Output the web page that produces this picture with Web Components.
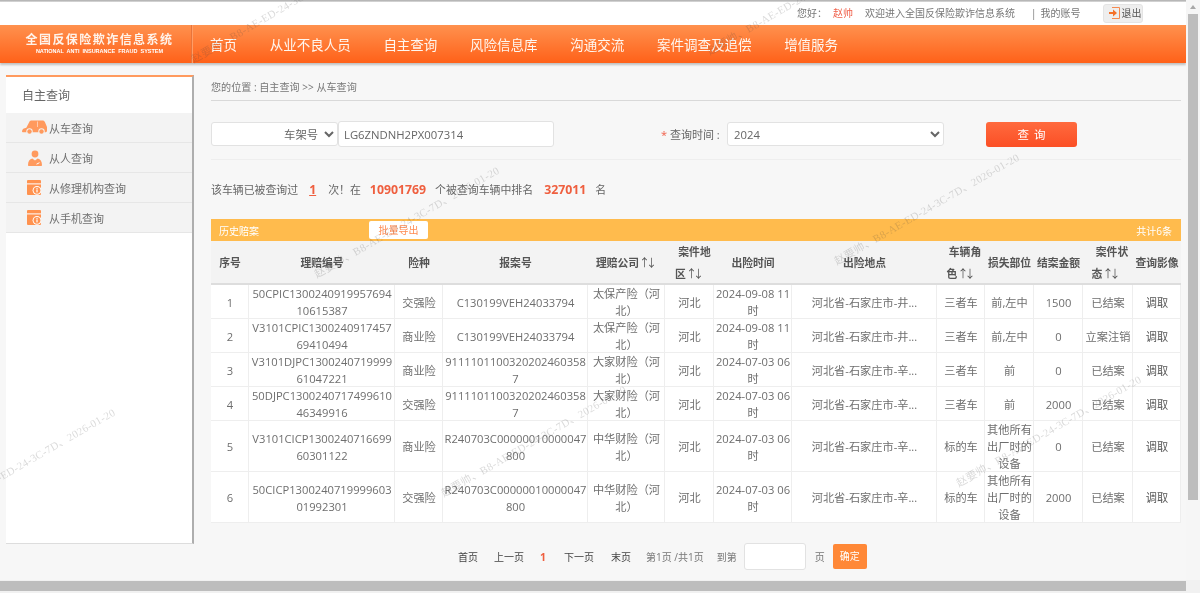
<!DOCTYPE html>
<html lang="zh-CN">

<head>
    <meta charset="UTF-8">
    <title>全国反保险欺诈信息系统</title>
    <style>
        html, body { margin: 0; padding: 0; overflow: hidden; }
        body { width: 1200px; height: 593px; font-family: "Open Sans", "Noto Sans CJK SC", sans-serif; color: #666; }
    </style>
</head>

<body>
    <rs-app>
        <rs-topbar slot="top"></rs-topbar>
        <rs-nav slot="top"></rs-nav>
        <rs-sidebar slot="side"></rs-sidebar>
        <rs-crumb>您的位置 : 自主查询 &gt;&gt; 从车查询</rs-crumb>
        <rs-search></rs-search>
        <rs-stats></rs-stats>
        <rs-claims></rs-claims>
        <rs-pager></rs-pager>
    </rs-app>
</body>
<script>
    const FONT = '"Open Sans", "Noto Sans CJK SC", sans-serif'

    function define(name, css, html, setup) {
        customElements.define(name, class extends HTMLElement {
            constructor() {
                super();
                const root = this.attachShadow({ mode: 'open' })
                root.innerHTML = `<style>${css}</style>${html}`
                if (setup) setup(root)
            }
        })
    }

    // page frame, with the two fake browser scrollbars and the watermark layer
    define('rs-app', `
        :host { display: grid; position: relative; width: 1200px; height: 593px; overflow: hidden; background: #fff; filter: blur(.4px);
                grid-template-columns: 1186px 14px; grid-template-rows: 580px 13px; font: 11px ${FONT}; color: #666; }
        .view { background: #f7f7f7; overflow: hidden; display: flex; flex-direction: column; position: relative; }
        .view::before { content: ""; position: absolute; left: 0; right: 0; top: 0; height: 2px; background: linear-gradient(#aaa, #ddd); z-index: 2; }
        .body { display: flex; flex: none; padding-top: 12px; }
        .main { width: 970px; margin-left: 17px; }
        .vbar { background: #f6f6f6; display: flex; flex-direction: column; align-items: center; padding-top: 5px; }
        .up { width: 0; height: 0; border: 3.5px solid transparent; border-top: 0; border-bottom: 4px solid #a8a8a8; margin-bottom: 5px; }
        .vthumb { width: 10px; height: 486px; background: #bdbdbd; }
        .hbar { grid-column: 1 / 3; background: #f1f1f1; padding-top: 1px; }
        .hthumb { height: 10px; background: #bdbdbd; width: 1186px; }
        .marks { position: absolute; inset: 0; pointer-events: none; z-index: 5; }
        .mark { position: absolute; white-space: nowrap; transform-origin: 0 100%; transform: rotate(-30deg);
                font: 10.8px "Liberation Serif", "Noto Sans CJK SC", serif; color: rgba(70, 70, 70, .2); line-height: 12px; letter-spacing: .35px; }
    `, `
        <div class="view">
            <slot name="top"></slot>
            <div class="body">
                <slot name="side"></slot>
                <div class="main"><slot></slot></div>
            </div>
        </div>
        <div class="vbar"><div class="up"></div><div class="vthumb"></div></div>
        <div class="hbar"><div class="hthumb"></div></div>
        <div class="marks"></div>
    `, root => {
        const marks = root.querySelector('.marks')
        // start point (bottom-left) of each watermark
        const spots = [[195, 65], [711, 57], [318, 280], [838, 267], [-66, 522], [445, 499], [960, 489]]
        spots.forEach(([x, y]) => {
            const m = document.createElement('div')
            m.className = 'mark'
            m.textContent = '赵要帅、B8-AE-ED-24-3C-7D、2026-01-20'
            m.style.left = x + 'px'
            m.style.top = (y - 12) + 'px'
            marks.appendChild(m)
        })
    })

    define('rs-topbar', `
        :host { display: flex; flex: none; height: 25px; background: #fff; align-items: center; font-size: 10px; color: #777; padding-left: 797px; box-sizing: border-box; }
        .name { color: #f0604a; margin: 0 12px 0 6px; }
        .sep { margin: 0 4px 0 16px; }
        .out { display: flex; align-items: center; width: 40px; height: 19px; margin-left: 22px; background: #eee; border: 1px solid #e4e4e4; border-radius: 3px;
               box-sizing: border-box; padding-left: 4px; gap: 1px; color: #555; margin-top: 1px; line-height: 14px; }
        svg { display: block; }
    `, `
        <span>您好：</span><span class="name">赵帅</span><span>欢迎进入全国反保险欺诈信息系统</span>
        <span class="sep">|</span><span>我的账号</span>
        <span class="out">
            <svg width="13" height="14" viewBox="0 0 13 14"><path d="M4 1.5h7.5v11H4" fill="none" stroke="#f58a50" stroke-width="1"/><path d="M1 6h4V3.5L9 7l-4 3.5V8H1z" fill="#f4722b"/></svg>
            <span>退出</span>
        </span>
    `)

    define('rs-nav', `
        :host { display: flex; flex: none; height: 38px; align-items: center; background: linear-gradient(#ff914e, #ff6119); color: #fff7f0; box-shadow: 0 2px 2px rgba(0, 0, 0, .22); position: relative; z-index: 1; }
        .logo { width: 192px; height: 38px; box-sizing: border-box; border-right: 1px solid #e8743a; box-shadow: 1px 0 0 #ff9d66;
                display: flex; flex-direction: column; align-items: center; justify-content: center; padding-left: 8px; margin-right: 18px; flex: none; }
        .zh { font: bold 12px/16px "Noto Sans CJK SC", serif; letter-spacing: 1.45px; color: #fff3ea; margin-top: -2px; }
        .en { font: bold 5.5px/8px "Liberation Sans", sans-serif; word-spacing: 1.5px; color: #fff; white-space: nowrap; }
        .items { display: flex; gap: 32.7px; font-size: 13.5px; }
    `, `
        <div class="logo"><div class="zh">全国反保险欺诈信息系统</div><div class="en">NATIONAL ANTI INSURANCE FRAUD SYSTEM</div></div>
        <div class="items"><span>首页</span><span>从业不良人员</span><span>自主查询</span><span>风险信息库</span><span>沟通交流</span><span>案件调查及追偿</span><span>增值服务</span></div>
    `)

    const calIcon = `<svg width="14" height="15" viewBox="0 0 14 15"><path d="M1 0h12a1 1 0 0 1 1 1v13a1 1 0 0 1-1 1H1a1 1 0 0 1-1-1V1a1 1 0 0 1 1-1z" fill="#ff924f"/><rect y="3.4" width="14" height="1" fill="#fff"/><circle cx="10" cy="10.3" r="4.4" fill="#fff"/><circle cx="10" cy="10.3" r="3.4" fill="#ff924f"/><rect x="9.4" y="9.4" width="1.2" height="3" fill="#fff"/><rect x="9.4" y="7.9" width="1.2" height="1" fill="#fff"/></svg>`

    define('rs-sidebar', `
        :host { display: flex; flex-direction: column; flex: none; width: 188px; height: 469px; margin-left: 6px; box-sizing: border-box; background: #fff;
                border-top: 2px solid #ff9a5e; border-right: 2px solid #aeaeae; border-bottom: 1px solid #ddd; }
        .title { height: 36px; line-height: 37px; padding-left: 16px; font-size: 12px; color: #666; }
        .item { height: 30px; display: flex; align-items: center; box-sizing: border-box; background: #f3f3f3; border-bottom: 1px solid #e6e6e6; }
        .ic { width: 43px; display: flex; justify-content: center; flex: none; padding-left: 13px; box-sizing: border-box; }
        .ic.man { padding-left: 15px; }
        .t { color: #707070; }
        svg { display: block; }
    `, `
        <div class="title">自主查询</div>
        <div class="item"><span class="ic"><svg width="25" height="15" viewBox="0 0 25 15"><path d="M0 11.500c0-2.500 2-3.400 4.300-3.800L7.300 2C7.700 1 8.500.5 9.500.5h11c1.200 0 2 .6 2.500 1.700L25 7v3.800c0 .9-.5 1.400-1.300 1.400H.8C.3 12.200 0 12 0 11.500z" fill="#ff9a5e"/><rect x="15" y="1.500" width=".8" height="5.500" fill="#ffd9c2"/><circle cx="7.500" cy="11.500" r="3.200" fill="#f3f3f3"/><circle cx="19.500" cy="11.500" r="3.200" fill="#f3f3f3"/><circle cx="7.500" cy="11.500" r="2.200" fill="#ff9a5e"/><circle cx="19.500" cy="11.500" r="2.200" fill="#ff9a5e"/></svg></span><span class="t">从车查询</span></div>
        <div class="item"><span class="ic man"><svg width="14" height="16" viewBox="0 0 14 16"><circle cx="7" cy="4" r="3.400" fill="#ff9a5e"/><path d="M0 15c0-3.700 1.700-6 4.300-6.500L7 10.500l2.700-2C12.300 9 14 11.300 14 15c0 .6-.4 1-1 1H1c-.6 0-1-.4-1-1z" fill="#ff9a5e"/><path d="M8.500 14.200l3-1.500" stroke="#fff" stroke-width="1"/></svg></span><span class="t">从人查询</span></div>
        <div class="item"><span class="ic">${calIcon}</span><span class="t">从修理机构查询</span></div>
        <div class="item"><span class="ic">${calIcon}</span><span class="t">从手机查询</span></div>
    `)

    define('rs-crumb', `
        :host { display: block; height: 26px; box-sizing: border-box; line-height: 24px; border-bottom: 1px solid #d9d9d9; color: #777; font-size: 10.1px; }
    `, `<slot></slot>`)

    define('rs-search', `
        :host { display: flex; align-items: center; height: 26px; margin-top: 20px; padding-bottom: 12px; border-bottom: 1px solid #eee; font-size: 11px; color: #666; }
        select, input { font: 11.300px ${FONT}; color: #666; background: #fff; border: 1px solid #e2e2e2; border-radius: 3px; box-sizing: border-box; outline: 0; }
        .kind { width: 127px; height: 24px; text-align-last: right; padding-right: 3px; }
        .vin { width: 216px; height: 26px; padding: 0 5px; }
        label { margin-left: 107px; width: 66px; white-space: nowrap; }
        label b { color: #f0604a; font-weight: normal; }
        .year { width: 217px; height: 24px; padding-left: 2px; }
        .go { margin-left: 42px; width: 91px; height: 25px; border-radius: 3px; background: linear-gradient(#ff6a3e, #fb4f25); color: #fff; font-size: 11.500px; line-height: 25px; text-align: center; word-spacing: 2px; }
    `, `
        <select class="kind"><option>车架号</option></select>
        <input class="vin" value="LG6ZNDNH2PX007314">
        <label><b>*</b> 查询时间 :</label>
        <select class="year"><option>2024</option></select>
        <div class="go">查 询</div>
    `)

    define('rs-stats', `
        :host { display: block; margin-top: 21px; height: 18px; line-height: 18px; white-space: nowrap; color: #666; font-size: 10.9px; }
        b { color: #ef5f3f; font-size: 12.300px; }
        .a { margin: 0 12px 0 11px; text-decoration: underline; }
        .b { margin: 0 9px 0 9px; }
        .c { margin: 0 9px 0 11px; }
    `, `该车辆已被查询过<b class="a">1</b>次！在<b class="b">10901769</b>个被查询车辆中排名<b class="c">327011</b>名`)

    const claims = [
        ['1', '50CPIC1300240919957694<br>10615387', '交强险', 'C130199VEH24033794', '太保产险（河<br>北）', '河北', '2024-09-08 11<br>时', '河北省-石家庄市-井...', '三者车', '前,左中', '1500', '已结案'],
        ['2', 'V3101CPIC1300240917457<br>69410494', '商业险', 'C130199VEH24033794', '太保产险（河<br>北）', '河北', '2024-09-08 11<br>时', '河北省-石家庄市-井...', '三者车', '前,左中', '0', '立案注销'],
        ['3', 'V3101DJPC1300240719999<br>61047221', '商业险', '9111101100320202460358<br>7', '大家财险（河<br>北）', '河北', '2024-07-03 06<br>时', '河北省-石家庄市-辛...', '三者车', '前', '0', '已结案'],
        ['4', '50DJPC1300240717499610<br>46349916', '交强险', '9111101100320202460358<br>7', '大家财险（河<br>北）', '河北', '2024-07-03 06<br>时', '河北省-石家庄市-辛...', '三者车', '前', '2000', '已结案'],
        ['5', 'V3101CICP1300240716699<br>60301122', '商业险', 'R240703C00000010000047<br>800', '中华财险（河<br>北）', '河北', '2024-07-03 06<br>时', '河北省-石家庄市-辛...', '标的车', '其他所有<br>出厂时的<br>设备', '0', '已结案'],
        ['6', '50CICP1300240719999603<br>01992301', '交强险', 'R240703C00000010000047<br>800', '中华财险（河<br>北）', '河北', '2024-07-03 06<br>时', '河北省-石家庄市-辛...', '标的车', '其他所有<br>出厂时的<br>设备', '2000', '已结案']
    ]
    const colWidths = [38, 146, 48, 145, 77, 49, 78, 145, 48, 49, 49, 50, 48]

    define('rs-claims', `
        :host { display: block; margin-top: 20px; font-size: 11.2px; }
        .bar { height: 22px; background: #ffbb4d; color: #fff; display: flex; align-items: center; padding: 0 9px 0 8px; font-size: 10px; position: relative; }
        .export { position: absolute; left: 158px; top: 2px; width: 59px; height: 18px; background: #fff; border-radius: 2px; color: #ff8a50; font-size: 10px; line-height: 18px; text-align: center; }
        .total { margin-left: auto; }
        table { width: 970px; table-layout: fixed; border-collapse: separate; border-spacing: 0; background: #fff; }
        th { height: 44px; padding: 0; background: #f3f3f3; color: #555; font-size: 10.8px; font-weight: bold; line-height: 22px; white-space: nowrap; box-shadow: inset 0 -2px 0 #ddd; }
        th i { font: normal 11px "Noto Sans CJK SC", sans-serif; letter-spacing: -4px; padding-right: 4px; }
        th.r1 { text-indent: 10px; }
        th.r2 { text-indent: 12px; padding-right: 4px; }
        th.r3 { text-indent: 8px; }
        td { padding: 0; line-height: 17px; text-align: center; white-space: nowrap; color: #6e6e6e; box-shadow: inset -1px -1px 0 #eee; }
        td.dark { color: #555; }
    `, `
        <div class="bar"><span>历史赔案</span><span class="export">批量导出</span><span class="total">共计6条</span></div>
        <table>
            <colgroup>${colWidths.map(w => `<col style="width:${w}px">`).join('')}</colgroup>
            <thead><tr>
                <th>序号</th><th>理赔编号</th><th>险种</th><th>报案号</th><th>理赔公司<i>↑↓</i></th>
                <th class="r1">案件地<br>区<i>↑↓</i></th><th>出险时间</th><th>出险地点</th>
                <th class="r3">车辆角<br>色<i>↑↓</i></th><th>损失部位</th><th>结案金额</th>
                <th class="r2">案件状<br>态<i>↑↓</i></th><th>查询影像</th>
            </tr></thead>
            <tbody></tbody>
        </table>
    `, root => {
        const body = root.querySelector('tbody')
        claims.forEach(row => {
            const tr = document.createElement('tr')
            tr.innerHTML = row.map(text => `<td>${text}</td>`).join('') + '<td class="dark">调取</td>'
            body.appendChild(tr)
        })
    })

    define('rs-pager', `
        :host { display: flex; align-items: center; height: 27px; margin-top: 20px; padding-left: 247px; font-size: 10px; color: #777; white-space: nowrap; }
        a { color: #444; margin-right: 16px; }
        a.n { margin-right: 17px; }
        b { color: #ef5f3f; margin-right: 18px; font-size: 10.500px; }
        .info { margin: 0 13px 0 -1px; }
        input { width: 62px; height: 27px; box-sizing: border-box; border: 1px solid #e2e2e2; border-radius: 3px; background: #fff; margin: 0 9px 0 7px; }
        .ok { margin-left: 8px; width: 34px; height: 25px; border-radius: 2px; background: #ff8837; color: #fff; line-height: 25px; text-align: center; }
    `, `
        <a>首页</a><a>上一页</a><b>1</b><a class="n">下一页</a><a>末页</a>
        <span class="info">第1页 /共1页</span><span>到第</span><input><span>页</span><span class="ok">确定</span>
    `)
</script>

</html>
